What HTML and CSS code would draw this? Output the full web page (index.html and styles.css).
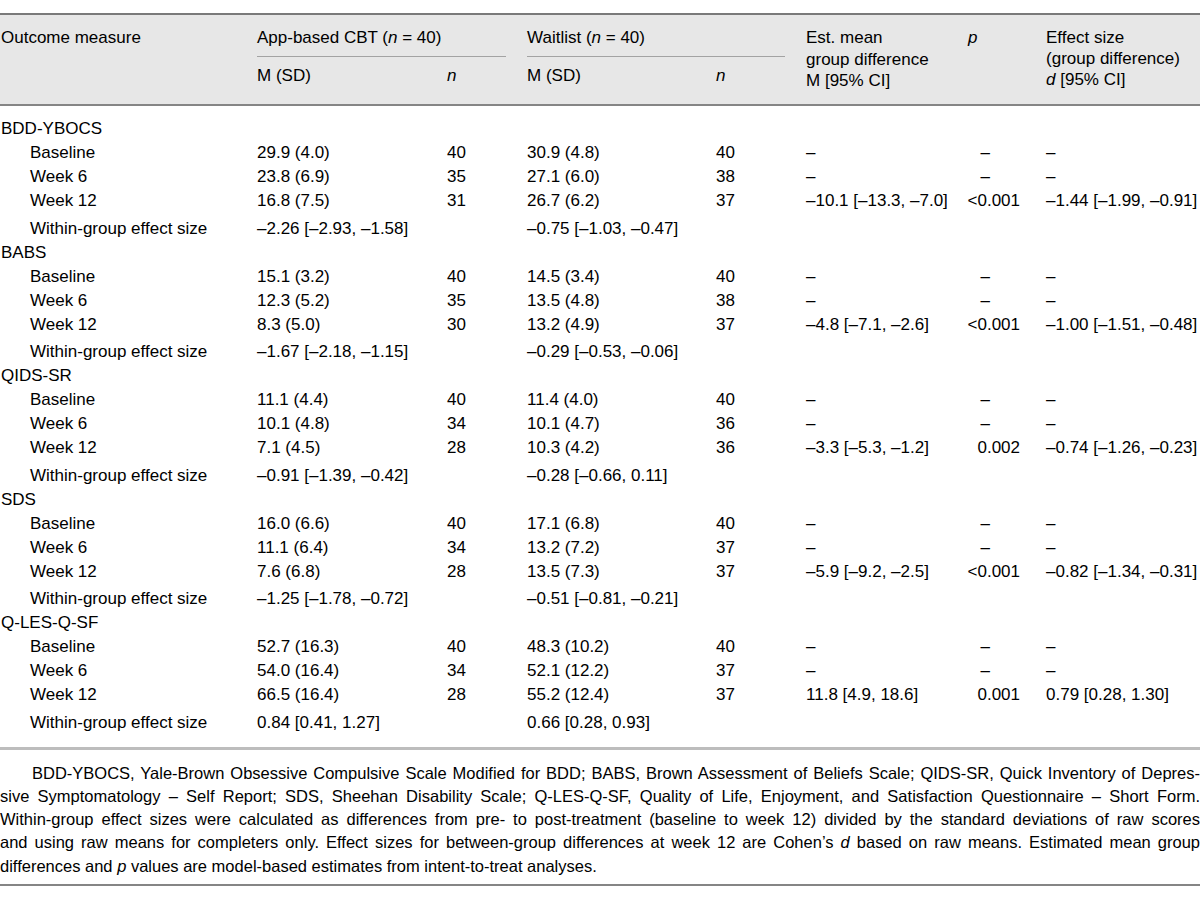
FILE: index.html
```html
<!DOCTYPE html>
<html lang="en">
<head>
<meta charset="utf-8">
<title>Outcome measures</title>
<link rel="stylesheet" href="styles.css">
</head>
<body>
<div class="page">
<table class="results">
  <colgroup>
    <col class="c-measure">
    <col class="c-msd">
    <col class="c-n1">
    <col class="c-msd2">
    <col class="c-n2">
    <col class="c-est">
    <col class="c-p">
    <col class="c-es">
  </colgroup>
  <thead>
    <tr class="h1">
      <th rowspan="2" class="th-measure">Outcome measure</th>
      <th colspan="2" class="th-group"><div class="grp">App-based CBT (<i>n</i> = 40)</div></th>
      <th colspan="2" class="th-group"><div class="grp">Waitlist (<i>n</i> = 40)</div></th>
      <th rowspan="2" class="th-est">Est. mean<br>group difference<br>M [95% CI]</th>
      <th rowspan="2" class="th-p"><i>p</i></th>
      <th rowspan="2" class="th-es">Effect size<br>(group difference)<br><i>d</i> [95% CI]</th>
    </tr>
    <tr class="h2">
      <th>M (SD)</th>
      <th><i>n</i></th>
      <th>M (SD)</th>
      <th><i>n</i></th>
    </tr>
  </thead>
  <tbody>
    <tr class="grp-row first"><td colspan="8">BDD-YBOCS</td></tr>
    <tr><td class="lbl">Baseline</td><td>29.9 (4.0)</td><td>40</td><td>30.9 (4.8)</td><td>40</td><td>–</td><td class="pv dash">–</td><td>–</td></tr>
    <tr><td class="lbl">Week 6</td><td>23.8 (6.9)</td><td>35</td><td>27.1 (6.0)</td><td>38</td><td>–</td><td class="pv dash">–</td><td>–</td></tr>
    <tr><td class="lbl">Week 12</td><td>16.8 (7.5)</td><td>31</td><td>26.7 (6.2)</td><td>37</td><td>–10.1 [–13.3, –7.0]</td><td class="pv">&lt;0.001</td><td>–1.44 [–1.99, –0.91]</td></tr>
    <tr class="within"><td class="lbl">Within-group effect size</td><td colspan="2">–2.26 [–2.93, –1.58]</td><td colspan="2">–0.75 [–1.03, –0.47]</td><td></td><td></td><td></td></tr>

    <tr class="grp-row"><td colspan="8">BABS</td></tr>
    <tr><td class="lbl">Baseline</td><td>15.1 (3.2)</td><td>40</td><td>14.5 (3.4)</td><td>40</td><td>–</td><td class="pv dash">–</td><td>–</td></tr>
    <tr><td class="lbl">Week 6</td><td>12.3 (5.2)</td><td>35</td><td>13.5 (4.8)</td><td>38</td><td>–</td><td class="pv dash">–</td><td>–</td></tr>
    <tr><td class="lbl">Week 12</td><td>8.3 (5.0)</td><td>30</td><td>13.2 (4.9)</td><td>37</td><td>–4.8 [–7.1, –2.6]</td><td class="pv">&lt;0.001</td><td>–1.00 [–1.51, –0.48]</td></tr>
    <tr class="within"><td class="lbl">Within-group effect size</td><td colspan="2">–1.67 [–2.18, –1.15]</td><td colspan="2">–0.29 [–0.53, –0.06]</td><td></td><td></td><td></td></tr>

    <tr class="grp-row"><td colspan="8">QIDS-SR</td></tr>
    <tr><td class="lbl">Baseline</td><td>11.1 (4.4)</td><td>40</td><td>11.4 (4.0)</td><td>40</td><td>–</td><td class="pv dash">–</td><td>–</td></tr>
    <tr><td class="lbl">Week 6</td><td>10.1 (4.8)</td><td>34</td><td>10.1 (4.7)</td><td>36</td><td>–</td><td class="pv dash">–</td><td>–</td></tr>
    <tr><td class="lbl">Week 12</td><td>7.1 (4.5)</td><td>28</td><td>10.3 (4.2)</td><td>36</td><td>–3.3 [–5.3, –1.2]</td><td class="pv">0.002</td><td>–0.74 [–1.26, –0.23]</td></tr>
    <tr class="within"><td class="lbl">Within-group effect size</td><td colspan="2">–0.91 [–1.39, –0.42]</td><td colspan="2">–0.28 [–0.66, 0.11]</td><td></td><td></td><td></td></tr>

    <tr class="grp-row"><td colspan="8">SDS</td></tr>
    <tr><td class="lbl">Baseline</td><td>16.0 (6.6)</td><td>40</td><td>17.1 (6.8)</td><td>40</td><td>–</td><td class="pv dash">–</td><td>–</td></tr>
    <tr><td class="lbl">Week 6</td><td>11.1 (6.4)</td><td>34</td><td>13.2 (7.2)</td><td>37</td><td>–</td><td class="pv dash">–</td><td>–</td></tr>
    <tr><td class="lbl">Week 12</td><td>7.6 (6.8)</td><td>28</td><td>13.5 (7.3)</td><td>37</td><td>–5.9 [–9.2, –2.5]</td><td class="pv">&lt;0.001</td><td>–0.82 [–1.34, –0.31]</td></tr>
    <tr class="within"><td class="lbl">Within-group effect size</td><td colspan="2">–1.25 [–1.78, –0.72]</td><td colspan="2">–0.51 [–0.81, –0.21]</td><td></td><td></td><td></td></tr>

    <tr class="grp-row"><td colspan="8">Q-LES-Q-SF</td></tr>
    <tr><td class="lbl">Baseline</td><td>52.7 (16.3)</td><td>40</td><td>48.3 (10.2)</td><td>40</td><td>–</td><td class="pv dash">–</td><td>–</td></tr>
    <tr><td class="lbl">Week 6</td><td>54.0 (16.4)</td><td>34</td><td>52.1 (12.2)</td><td>37</td><td>–</td><td class="pv dash">–</td><td>–</td></tr>
    <tr><td class="lbl">Week 12</td><td>66.5 (16.4)</td><td>28</td><td>55.2 (12.4)</td><td>37</td><td>11.8 [4.9, 18.6]</td><td class="pv">0.001</td><td>0.79 [0.28, 1.30]</td></tr>
    <tr class="within last"><td class="lbl">Within-group effect size</td><td colspan="2">0.84 [0.41, 1.27]</td><td colspan="2">0.66 [0.28, 0.93]</td><td></td><td></td><td></td></tr>
  </tbody>
</table>

<div class="notes">
  <div class="line first-line">BDD-YBOCS, Yale-Brown Obsessive Compulsive Scale Modified for BDD; BABS, Brown Assessment of Beliefs Scale; QIDS-SR, Quick Inventory of Depres-</div>
  <div class="line">sive Symptomatology – Self Report; SDS, Sheehan Disability Scale; Q-LES-Q-SF, Quality of Life, Enjoyment, and Satisfaction Questionnaire – Short Form.</div>
  <div class="line">Within-group effect sizes were calculated as differences from pre- to post-treatment (baseline to week 12) divided by the standard deviations of raw scores</div>
  <div class="line">and using raw means for completers only. Effect sizes for between-group differences at week 12 are Cohen’s <i>d</i> based on raw means. Estimated mean group</div>
  <div class="line end">differences and <i>p</i> values are model-based estimates from intent-to-treat analyses.</div>
</div>
</div>
</body>
</html>
```

FILE: styles.css
```css
html, body {
  margin: 0;
  padding: 0;
  background: #ffffff;
}

body {
  font-family: "Liberation Sans", Arial, sans-serif;
  color: #000000;
}

.page {
  padding-top: 13px;
  width: 1200px;
}

.results {
  width: 1200px;
  border-collapse: collapse;
  table-layout: fixed;
  font-size: 17px;
}

.c-measure { width: 257px; }
.c-msd { width: 190px; }
.c-n1 { width: 80px; }
.c-msd2 { width: 189px; }
.c-n2 { width: 90px; }
.c-est { width: 154px; }
.c-p { width: 86px; }
.c-es { width: 154px; }

/* header */
.results thead th {
  background: #e7e7e7;
  font-weight: normal;
  text-align: left;
  vertical-align: top;
  line-height: 21px;
  padding: 0;
  white-space: nowrap;
}

.results thead tr.h1 th {
  border-top: 2px solid #7a7a7a;
  padding-top: 12px;
}

.results thead th.th-measure {
  padding-left: 1px;
}

.results thead th.th-group {
  padding-bottom: 0;
}

.grp {
  padding-bottom: 8px;
  border-bottom: 1px solid #a3a3a3;
  margin-right: 21px;
}

.results thead tr.h2 th {
  padding-top: 8px;
  padding-bottom: 18px;
}

.results thead tr.h2 th,
.results thead th.th-measure,
.results thead th.th-est,
.results thead th.th-p,
.results thead th.th-es {
  border-bottom: 2px solid #858585;
}

.results thead th.th-est {
  line-height: 21.5px;
}

.results thead th.th-p {
  padding-left: 8px;
}

/* body */
.results tbody td {
  padding: 0;
  line-height: 24px;
  white-space: nowrap;
  vertical-align: top;
}

.results tbody tr.grp-row td {
  padding-left: 1px;
}

.results tbody tr.first td {
  padding-top: 11px;
}

.results tbody td.lbl {
  padding-left: 30px;
}

.results tbody tr.within td {
  padding-top: 3.5px;
}

.results tbody tr.last td {
  padding-bottom: 12px;
  border-bottom: 3px solid #bdbdbd;
}

.results tbody td.pv {
  text-align: right;
  padding-right: 26px;
}

.results tbody td.pv.dash {
  padding-right: 56px;
}

/* notes */
.notes {
  padding-top: 12px;
  padding-bottom: 6px;
  border-bottom: 2px solid #858585;
  font-size: 16.5px;
  line-height: 23.3px;
}

.notes .line {
  text-align: justify;
  text-align-last: justify;
  white-space: nowrap;
}

.notes .line.first-line {
  padding-left: 32px;
}

.notes .line.end {
  text-align-last: left;
}
```
